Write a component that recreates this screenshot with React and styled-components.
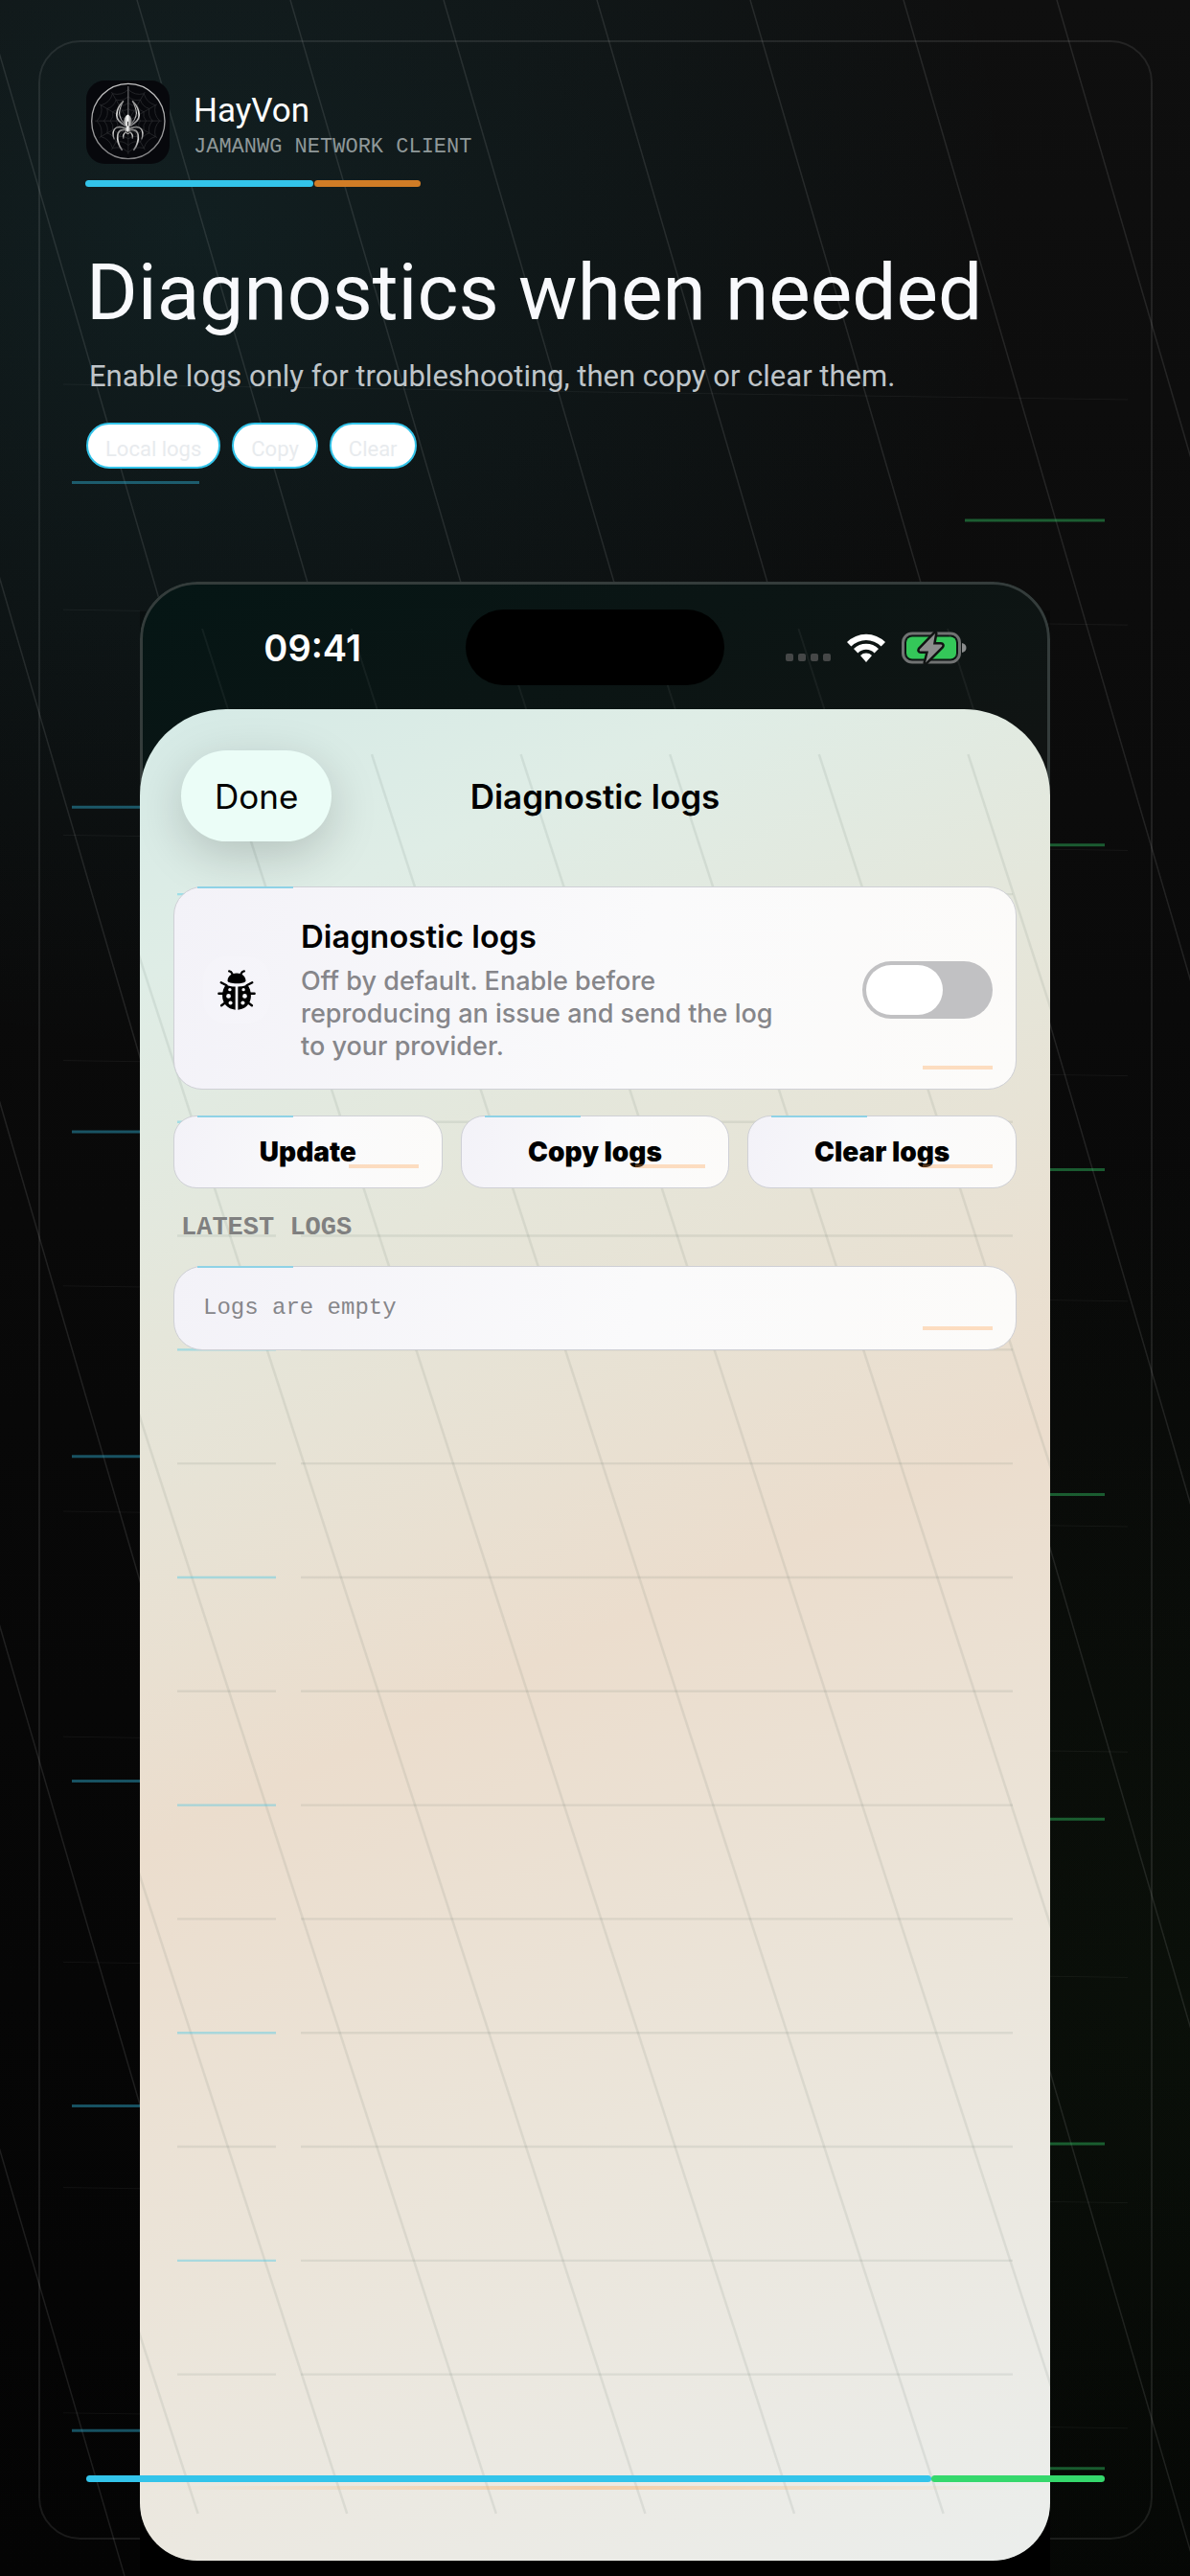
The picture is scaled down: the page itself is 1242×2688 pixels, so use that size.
import React, { useState } from "react"
import styled, { createGlobalStyle } from "styled-components"

const sans = `Inter, "Liberation Sans", sans-serif`
const display = `Roboto, "Liberation Sans", sans-serif`
const mono = `"Liberation Mono", monospace`

const GlobalStyle = createGlobalStyle`
	* {
		box-sizing: border-box;
	}

	body {
		margin: 0;
		background: #050505;
		font-family: ${sans};
	}

	h1, h2, p, ul {
		margin: 0;
		padding: 0;
	}

	button {
		font-family: inherit;
		cursor: pointer;
	}
`

const tags = ["Local logs", "Copy", "Clear"]
const actions = ["Update", "Copy logs", "Clear logs"]

const range = (count) => Array.from({ length: count }, (_, i) => i)

function Backdrop() {
	return (
		<BackdropSvg viewBox="0 0 1242 2688" preserveAspectRatio="none" aria-hidden="true">
			<g stroke="#fff" strokeOpacity="0.1" strokeWidth="1.5">
				{range(14).map((i) => (
					<line key={i} x1={-977 + i * 160} y1="0" x2={-190 + i * 160} y2="2688" />
				))}
			</g>
			<g stroke="#fff" strokeOpacity="0.05">
				{range(10).map((i) => (
					<line key={i} x1="66" y1={401 + i * 235.2} x2="1177" y2={417 + i * 235.2} />
				))}
			</g>
			<g stroke="#33c4ea" strokeOpacity="0.4" strokeWidth="3">
				{range(7).map((i) => (
					<line key={i} x1="75" y1={503.4 + i * 338.8} x2="208" y2={503.4 + i * 338.8} />
				))}
			</g>
			<g stroke="#35d86c" strokeOpacity="0.4" strokeWidth="3">
				{range(7).map((i) => (
					<line key={i} x1="1007" y1={543 + i * 338.8} x2="1153" y2={543 + i * 338.8} />
				))}
			</g>
		</BackdropSvg>
	)
}

// Ruled pattern behind the sheet content, in sheet coordinates
function SheetLines() {
	return (
		<BackdropSvg viewBox="0 0 950 1931" preserveAspectRatio="none" aria-hidden="true">
			<g stroke="#3c4a40" strokeOpacity="0.09" strokeWidth="2.5">
				{range(10).map((i) => (
					<line key={i} x1={-536 + i * 155.6} y1="47" x2={60.6 + i * 155.6} y2="1882" />
				))}
			</g>
			{range(14).map((i) => {
				const y = 193 + i * 118.75
				return (
					<g key={i} strokeWidth="2.4">
						<line
							x1="39"
							y1={y}
							x2="142"
							y2={y}
							stroke={i % 2 ? "#3c4a40" : "#33c4ea"}
							strokeOpacity={i % 2 ? 0.09 : 0.36}
						/>
						<line x1="168" y1={y} x2="911" y2={y} stroke="#3c4a40" strokeOpacity="0.09" />
					</g>
				)
			})}
		</BackdropSvg>
	)
}

function StatusLines() {
	return (
		<BackdropSvg viewBox="0 0 950 133" preserveAspectRatio="none" aria-hidden="true">
			<g stroke="#fff" strokeOpacity="0.05" strokeWidth="2">
				{range(6).map((i) => (
					<line key={i} x1={65 + i * 155.6} y1="49" x2={92 + i * 155.6} y2="133" />
				))}
			</g>
		</BackdropSvg>
	)
}

const polar = (angle, r) => {
	const a = (angle * Math.PI) / 180
	return [131 + r * Math.cos(a), 126 + r * Math.sin(a)]
}

// One ring of the web: segments between the spokes sag towards the centre
const webRing = (r) =>
	range(12)
		.map((i) => {
			const [x1, y1] = polar(i * 30, r)
			const [cx, cy] = polar(i * 30 + 15, r * 0.82)
			const [x2, y2] = polar(i * 30 + 30, r)
			return `M${x1} ${y1}Q${cx} ${cy} ${x2} ${y2}`
		})
		.join("")

function SpiderLogo() {
	const legs = (
		<g fill="none" stroke="url(#leg)" strokeLinecap="round">
			<path d="M121 141C108 132 95 124 95 108C95 90 104 76 115 65" strokeWidth="5" />
			<path d="M118 134C104 118 101 104 105 90C108 80 111 72 115 65" strokeWidth="3" />
			<path d="M122 149C106 143 94 143 88 152C82 161 83 172 87 182" strokeWidth="4" />
			<path d="M123 154C109 152 100 158 98 170C96 186 101 202 111 216" strokeWidth="5" />
			<path d="M125 160C117 164 114 170 116 180" strokeWidth="4" />
		</g>
	)

	return (
		<Logo viewBox="0 0 260 260" role="img" aria-label="HayVon">
			<defs>
				<linearGradient id="leg" x1="0" y1="0" x2="0" y2="1">
					<stop offset="0" stopColor="#8a8a8a" />
					<stop offset="0.5" stopColor="#e2e2e0" />
					<stop offset="1" stopColor="#77777a" />
				</linearGradient>
				<linearGradient id="body" x1="0" y1="0" x2="1" y2="0">
					<stop offset="0" stopColor="#8f8f8f" />
					<stop offset="0.45" stopColor="#ffffff" />
					<stop offset="1" stopColor="#6c6c6c" />
				</linearGradient>
				<linearGradient id="ring" x1="0" y1="0" x2="0" y2="1">
					<stop offset="0" stopColor="#c4c4c4" />
					<stop offset="1" stopColor="#828284" />
				</linearGradient>
			</defs>
			<rect width="260" height="260" rx="58" fill="#07080c" />
			<g fill="none" stroke="#303135" strokeWidth="2">
				{range(12).map((i) => {
					const [x, y] = polar(i * 30, 104)
					return <line key={i} x1="131" y1="126" x2={x} y2={y} />
				})}
				<path d={webRing(38) + webRing(56) + webRing(76) + webRing(98)} />
			</g>
			<line x1="131" y1="18" x2="131" y2="108" stroke="#6f6f72" strokeWidth="3" />
			<ellipse cx="131" cy="127" rx="114" ry="117" fill="none" stroke="url(#ring)" strokeWidth="4" />
			{legs}
			<g transform="translate(260 0) scale(-1 1)">{legs}</g>
			<path d="M130 106C139 110 144 122 142 132C141 139 136 144 130 144C124 144 119 139 118 132C116 122 121 110 130 106Z" fill="url(#body)" />
			<path d="M130 128V142" stroke="#333" strokeWidth="3" />
			<path d="M130 143C138 144 140 151 138 158C136 164 134 168 130 168C126 168 124 164 122 158C120 151 122 144 130 143Z" fill="url(#body)" />
			<path d="M125 158L130 164L135 158" fill="none" stroke="#222" strokeWidth="3" />
		</Logo>
	)
}

function Ladybug() {
	return (
		<svg width="40" height="42" viewBox="0 0 118 124" aria-hidden="true">
			<g fill="none" stroke="#000" strokeWidth="7" strokeLinecap="round">
				<path d="M36 4C44 5 44 10 46 14" />
				<path d="M82 4C74 5 74 10 72 14" />
				<path d="M11 39L28 48M4 73H22M12 110L28 98" />
				<path d="M107 39L90 48M114 73H96M106 110L90 98" />
			</g>
			<path d="M59 10C76 10 87 21 87 34C87 39 74 42 59 42C44 42 31 39 31 34C31 21 42 10 59 10Z" />
			<path d="M55 52V123C31 121 15 104 15 80C15 66 19 55 26 46C34 50 44 52 55 52Z" />
			<path d="M63 52V123C87 121 103 104 103 80C103 66 99 55 92 46C84 50 74 52 63 52Z" />
			<g fill="#f5f5f9">
				<circle cx="38" cy="61" r="5" />
				<circle cx="34" cy="81" r="7" />
				<circle cx="40" cy="102" r="6" />
				<circle cx="80" cy="61" r="5" />
				<circle cx="84" cy="81" r="7" />
				<circle cx="78" cy="102" r="6" />
			</g>
		</svg>
	)
}

function Wifi() {
	return (
		<svg width="42" height="32" viewBox="0 0 42 32" aria-hidden="true">
			<path d="M1 10A28.5 28.5 0 0 1 41 10L36.6 14.4A22.3 22.3 0 0 0 5.4 14.4Z" fill="#fff" />
			<path d="M8 17A18.5 18.5 0 0 1 34 17L29.6 21.4A12.2 12.2 0 0 0 12.4 21.4Z" fill="#fff" />
			<path d="M15 24A8.5 8.5 0 0 1 27 24L21 31Z" fill="#fff" />
		</svg>
	)
}

function Battery() {
	return (
		<svg width="68" height="34" viewBox="0 0 68 34" aria-hidden="true">
			<rect x="1.5" y="2" width="59" height="30" rx="9.5" fill="none" stroke="#707272" strokeWidth="3" />
			<rect x="5" y="5.5" width="52" height="23" rx="6" fill="#34c759" />
			<path d="M63 12C66 12.5 67.5 14.5 67.5 17C67.5 19.5 66 21.5 63 22Z" fill="#8b8d8d" />
			<path
				d="M35 2L19 18.500Q18 20.500 20 20.500H28L25 32.500L42 15.500Q43 13.500 41 13.500H33Z"
				fill="#8b8d8d"
				stroke="#101312"
				strokeWidth="5"
				strokeLinejoin="round"
				paintOrder="stroke"
			/>
		</svg>
	)
}

function App() {
	const [enabled, setEnabled] = useState(false)

	return (
		<>
			<GlobalStyle />
			<Page>
				<Backdrop />
				<Frame />
				<Intro>
					<Brand>
						<SpiderLogo />
						<BrandText>
							<BrandName>HayVon</BrandName>
							<BrandNote>JAMANWG NETWORK CLIENT</BrandNote>
						</BrandText>
					</Brand>
					<Accent>
						<Stripe $width="238px" $color="#33c4ea" />
						<Stripe $width="111px" $color="#d07c26" />
					</Accent>
					<Headline>Diagnostics when needed</Headline>
					<Lead>Enable logs only for troubleshooting, then copy or clear them.</Lead>
					<Tags>
						{tags.map((tag) => (
							<Tag key={tag}>{tag}</Tag>
						))}
					</Tags>
				</Intro>

				<PhoneArea>
					<Phone>
						<StatusBar>
							<StatusLines />
							<Time>09:41</Time>
							<Island />
							<StatusIcons>
								<Dots>
									<i />
									<i />
									<i />
									<i />
								</Dots>
								<Wifi />
								<Battery />
							</StatusIcons>
						</StatusBar>
						<Sheet>
							<SheetLines />
							<Nav>
								<DoneButton type="button">Done</DoneButton>
								<NavTitle>Diagnostic logs</NavTitle>
							</Nav>
							<Content>
								<ToggleCard>
									<IconBox>
										<Ladybug />
									</IconBox>
									<CardText>
										<CardTitle htmlFor="logs-toggle">Diagnostic logs</CardTitle>
										<CardNote>
											Off by default. Enable before reproducing an issue and send the log to your
											provider.
										</CardNote>
									</CardText>
									<Switch
										id="logs-toggle"
										type="checkbox"
										role="switch"
										checked={enabled}
										onChange={(e) => setEnabled(e.target.checked)}
									/>
								</ToggleCard>
								<Actions>
									{actions.map((action) => (
										<ActionButton key={action} type="button">
											{action}
										</ActionButton>
									))}
								</Actions>
								<SectionLabel>LATEST LOGS</SectionLabel>
								<LogsCard>Logs are empty</LogsCard>
							</Content>
						</Sheet>
						<Glow />
					</Phone>
				</PhoneArea>

				<Footer>
					<Stripe $width="83%" $color="#33c4ea" />
					<Stripe $width="17%" $color="#35d86c" />
				</Footer>
			</Page>
		</>
	)
}

const Page = styled.main`
	position: relative;
	display: flex;
	flex-direction: column;
	min-height: 100vh;
	overflow: hidden;
	background:
		radial-gradient(circle at 16% 9%, rgba(40, 145, 160, 0.13), transparent 860px),
		radial-gradient(circle at 100% 78%, rgba(60, 130, 50, 0.08), transparent 900px),
		linear-gradient(180deg, #0f0f0f, #080808 55%, #040404);
`

const BackdropSvg = styled.svg`
	position: absolute;
	inset: 0;
	width: 100%;
	height: 100%;
`

const Frame = styled.div`
	position: absolute;
	inset: 42px 39px 38px 40px;
	border: 2px solid rgba(255, 255, 255, 0.09);
	border-radius: 44px;
`

const Intro = styled.header`
	position: relative;
	padding: 84px 90px 0;
	font-family: ${display};
`

const Brand = styled.div`
	display: flex;
	gap: 25px;
`

const Logo = styled.svg`
	width: 87px;
	height: 87px;
`

const BrandText = styled.div`
	display: flex;
	flex-direction: column;
	gap: 4px;
	padding-top: 12px;
`

const BrandName = styled.p`
	font-size: 35px;
	line-height: 40px;
	color: #fff;
`

const BrandNote = styled.p`
	font-family: ${mono};
	font-size: 22px;
	line-height: 28px;
	color: #8f9899;
`

const Accent = styled.div`
	display: flex;
	gap: 1px;
	margin: 17px 0 0 -1px;
`

const Stripe = styled.span`
	width: ${(props) => props.$width};
	height: 7px;
	border-radius: 4px;
	background: ${(props) => props.$color};
`

const Headline = styled.h1`
	margin-top: 60px;
	font-size: 82px;
	font-weight: 400;
	line-height: 100px;
	color: #f8f9fc;
`

const Lead = styled.p`
	margin-top: 16px;
	padding-left: 3px;
	font-size: 31px;
	line-height: 44px;
	color: #bfc5c9;
`

const Tags = styled.ul`
	display: flex;
	gap: 12px;
	margin-top: 26px;
	list-style: none;
`

const Tag = styled.li`
	height: 48px;
	padding: 4px 18px 0;
	border: 2px solid #33c4ea;
	border-radius: 24px;
	background: #fff;
	font-size: 22px;
	line-height: 44px;
	color: #e8ebee;
`

const PhoneArea = styled.div`
	position: relative;
	display: flex;
	flex: 1;
	margin: 118px 146px 0;
	padding-bottom: 16px;
	background: linear-gradient(
		180deg,
		transparent 30px,
		rgba(0, 0, 0, 0.35) 30px,
		rgba(0, 0, 0, 0.4) 60%,
		#000 97%
	);
`

const Phone = styled.section`
	position: relative;
	display: flex;
	flex: 1;
	flex-direction: column;
	overflow: hidden;
	border-radius: 60px;
	background: linear-gradient(155deg, #051615, #101413 24%, #12110f 50%);

	&::before {
		content: "";
		position: absolute;
		inset: 0;
		border: 3px solid #343c3b;
		border-radius: 60px;
	}
`

const StatusBar = styled.div`
	position: relative;
	display: grid;
	grid-template-columns: 1fr 270px 1fr;
	align-items: center;
	height: 133px;
	padding-top: 4px;
`

const Time = styled.span`
	position: relative;
	padding-right: 109px;
	text-align: right;
	font-size: 38px;
	font-weight: 600;
	color: #fff;
`

const Island = styled.div`
	position: relative;
	height: 79px;
	border-radius: 40px;
	background: #000;
`

const StatusIcons = styled.div`
	position: relative;
	display: flex;
	align-items: center;
	gap: 16px;
	padding-left: 64px;
`

const Dots = styled.span`
	display: flex;
	gap: 5px;
	padding-top: 20px;

	i {
		width: 8px;
		height: 8px;
		border-radius: 2px;
		background: #454747;
	}
`

const Sheet = styled.div`
	position: relative;
	flex: 1;
	overflow: hidden;
	padding: 43px 35px 96px;
	border-radius: 90px 90px 56px 56px;
	background: linear-gradient(
		155deg,
		#d5eae6,
		#dfede6 12%,
		#e5e6da 28%,
		#ebddcd 50%,
		#ebe5da 72%,
		#ebeeec
	);
`

const Nav = styled.div`
	position: relative;
	display: grid;
	grid-template-columns: 1fr auto 1fr;
	align-items: center;
	padding: 0 8px;
`

const DoneButton = styled.button`
	justify-self: start;
	height: 95px;
	padding: 0 35px;
	border: 0;
	border-radius: 48px;
	background: #ebfdf7;
	box-shadow: 0 14px 50px rgba(0, 0, 0, 0.18);
	font-size: 35px;
	color: #000;
`

const NavTitle = styled.h2`
	font-size: 35px;
	font-weight: 600;
	line-height: 42px;
	color: #000;
`

const Content = styled.div`
	position: relative;
	display: flex;
	flex-direction: column;
	margin-top: 47px;
`

const panel = `
	position: relative;
	border: 1px solid #cfd0d6;
	border-radius: 30px;
	background: linear-gradient(100deg, #f3f2f8, #fafafb 55%, #fcfbf9);

	&::before {
		content: "";
		position: absolute;
		top: -1px;
		left: 24px;
		width: 100px;
		height: 2px;
		background: #8fd2e6;
	}

	&::after {
		content: "";
		position: absolute;
		right: 24px;
		bottom: 20px;
		width: 73px;
		height: 4px;
		background: rgba(255, 160, 70, 0.32);
	}
`

const ToggleCard = styled.div`
	${panel}
	display: flex;
	align-items: center;
	gap: 32px;
	padding: 30px 24px 27px 30px;
`

const IconBox = styled.span`
	display: flex;
	align-items: center;
	justify-content: center;
	width: 70px;
	height: 70px;
	border-radius: 24px;
	background: rgba(255, 255, 255, 0.15);
`

const CardText = styled.div`
	flex: 1;
`

const CardTitle = styled.label`
	display: block;
	font-size: 33px;
	font-weight: 600;
	line-height: 42px;
	color: #000;
`

const CardNote = styled.p`
	max-width: 510px;
	margin-top: 9px;
	font-size: 27px;
	font-weight: 500;
	line-height: 34px;
	color: #86868a;
`

const Switch = styled.input`
	appearance: none;
	display: flex;
	width: 136px;
	height: 60px;
	margin: 0;
	padding: 4px;
	border-radius: 30px;
	background: ${(props) => (props.checked ? "#34c759" : "#c1c1c3")};
	cursor: pointer;

	&::before {
		content: "";
		width: 80px;
		height: 52px;
		margin-left: ${(props) => (props.checked ? "48px" : "0")};
		border-radius: 26px;
		background: #fff;
	}
`

const Actions = styled.div`
	display: grid;
	grid-template-columns: repeat(3, 1fr);
	gap: 19px;
	margin-top: 27px;
`

const ActionButton = styled.button`
	${panel}
	height: 76px;
	padding: 0;
	border-radius: 24px;
	font-size: 28px;
	font-weight: 900;
	color: #000;
`

const SectionLabel = styled.h2`
	margin: 25px 0 0 8px;
	font-family: ${mono};
	font-size: 27px;
	font-weight: 700;
	line-height: 32px;
	color: #808080;
`

const LogsCard = styled.div`
	${panel}
	margin-top: 24px;
	padding: 0 30px;
	font-family: ${mono};
	font-size: 24px;
	line-height: 86px;
	color: #86868a;
`

const Glow = styled.span`
	position: absolute;
	right: 40px;
	bottom: 74px;
	left: 20px;
	height: 4px;
	background: linear-gradient(90deg, transparent, rgba(255, 165, 80, 0.42) 50%, transparent);
`

const Footer = styled.div`
	position: absolute;
	right: 89px;
	bottom: 98px;
	left: 90px;
	display: flex;
`

export default App
